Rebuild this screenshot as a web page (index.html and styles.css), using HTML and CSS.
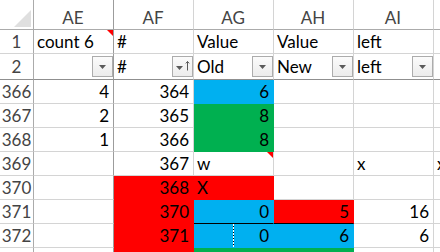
FILE: index.html
```html
<!DOCTYPE html>
<html lang="en">
<head>
  <meta charset="UTF-8">
  <meta name="viewport" content="width=device-width, initial-scale=1.0">
  <title>Sheet</title>
  <link rel="stylesheet" href="styles.css">
</head>
<body>
  <div class="sheet">
    <!-- Column headers -->
    <div class="c corner"><span class="corner-tri"></span></div>
    <div class="c hd frz">AE</div>
    <div class="c hd">AF</div>
    <div class="c hd">AG</div>
    <div class="c hd">AH</div>
    <div class="c hd">AI</div>
    <div class="c hd"></div>

    <!-- Row 1 -->
    <div class="c rh">1</div>
    <div class="c frz">count 6<span class="note"></span></div>
    <div class="c">#</div>
    <div class="c">Value</div>
    <div class="c">Value</div>
    <div class="c">left</div>
    <div class="c"></div>

    <!-- Row 2 : filter row -->
    <div class="c rh r2">2</div>
    <div class="c frz r2 flt">
      <span></span>
      <button class="drop"><svg width="9" height="5" viewBox="0 0 9 5"><polygon points="1,0 8,0 4.5,4" fill="#595959"/></svg></button>
    </div>
    <div class="c r2 flt">
      <span>#</span>
      <button class="drop sort">
        <svg width="15" height="12" viewBox="0 0 15 12">
          <polygon points="0,6 7,6 3.5,10" fill="#595959"/>
          <path d="M11.5 1.5v9M9.8 3.4l1.7-1.9 1.7 1.9" stroke="#595959" stroke-width="1" fill="none"/>
        </svg>
      </button>
    </div>
    <div class="c r2 flt">
      <span>Old</span>
      <button class="drop"><svg width="9" height="5" viewBox="0 0 9 5"><polygon points="1,0 8,0 4.5,4" fill="#595959"/></svg></button>
    </div>
    <div class="c r2 flt">
      <span>New</span>
      <button class="drop"><svg width="9" height="5" viewBox="0 0 9 5"><polygon points="1,0 8,0 4.5,4" fill="#595959"/></svg></button>
    </div>
    <div class="c r2 flt">
      <span>left</span>
      <button class="drop"><svg width="9" height="5" viewBox="0 0 9 5"><polygon points="1,0 8,0 4.5,4" fill="#595959"/></svg></button>
    </div>
    <div class="c r2"></div>

    <!-- Row 366 -->
    <div class="c rh">366</div>
    <div class="c frz num">4</div>
    <div class="c num">364</div>
    <div class="c num blue">6</div>
    <div class="c"></div>
    <div class="c"></div>
    <div class="c"></div>

    <!-- Row 367 -->
    <div class="c rh">367</div>
    <div class="c frz num">2</div>
    <div class="c num">365</div>
    <div class="c num green">8</div>
    <div class="c"></div>
    <div class="c"></div>
    <div class="c"></div>

    <!-- Row 368 -->
    <div class="c rh">368</div>
    <div class="c frz num">1</div>
    <div class="c num">366</div>
    <div class="c num green">8</div>
    <div class="c"></div>
    <div class="c"></div>
    <div class="c"></div>

    <!-- Row 369 -->
    <div class="c rh">369</div>
    <div class="c frz"></div>
    <div class="c num">367</div>
    <div class="c">w<span class="note"></span></div>
    <div class="c"></div>
    <div class="c">x</div>
    <div class="c">x</div>

    <!-- Row 370 -->
    <div class="c rh">370</div>
    <div class="c frz"></div>
    <div class="c num red">368</div>
    <div class="c red">X</div>
    <div class="c"></div>
    <div class="c"></div>
    <div class="c"></div>

    <!-- Row 371 -->
    <div class="c rh">371</div>
    <div class="c frz"></div>
    <div class="c num red">370</div>
    <div class="c num blue edge">0</div>
    <div class="c num red edge">5</div>
    <div class="c num">16</div>
    <div class="c"></div>

    <!-- Row 372 -->
    <div class="c rh">372</div>
    <div class="c frz"></div>
    <div class="c num red">371</div>
    <div class="c num blue">0<span class="dash"></span></div>
    <div class="c num blue">6</div>
    <div class="c num">6</div>
    <div class="c"></div>

    <!-- Row 373, only its top edge shows -->
    <div class="c rh"></div>
    <div class="c frz"></div>
    <div class="c red"></div>
    <div class="c green"></div>
    <div class="c green"></div>
    <div class="c"></div>
    <div class="c"></div>
  </div>
</body>
</html>
```

FILE: styles.css
```css
/* Page */
body {
  margin: 0;
  background: #fff;
  font-family: Lato, "Liberation Sans", sans-serif;
  font-size: 17px;
  overflow: hidden;
}

/* Grid of cells */
.sheet {
  display: grid;
  grid-template-columns: 34px repeat(6, 80px);
  grid-template-rows: 30px 24px 26px;
  grid-auto-rows: 24px;
}

.c {
  position: relative;
  box-sizing: border-box;
  border-right: 1px solid #d4d4d4;
  border-bottom: 1px solid #d4d4d4;
  padding: 0 4px 0 3px;
  line-height: 23px;
  white-space: nowrap;
  overflow: hidden;
  color: #000;
}

.num {
  text-align: right;
}

/* Headers */
.corner {
  border-right-color: #ababab;
  border-bottom-color: #ababab;
}

.corner-tri {
  position: absolute;
  right: 2px;
  bottom: 2px;
  width: 0;
  height: 0;
  border-left: 17px solid transparent;
  border-bottom: 17px solid #dfdfdf;
}

.hd {
  text-align: center;
  color: #444;
  padding-top: 6px;
  border-bottom-color: #ababab;
}

.rh {
  text-align: center;
  color: #444;
  padding: 0;
  border-right-color: #ababab;
}

/* Frozen pane lines */
.frz {
  border-right-color: #9c9c9c;
}

.r2 {
  border-bottom-color: #8f8f8f;
  padding-top: 1px;
}

/* Filter buttons */
.flt {
  display: flex;
  align-items: flex-start;
  padding-right: 0;
}

.flt span {
  flex: 1;
}

.drop {
  box-sizing: border-box;
  width: 21px;
  height: 21px;
  margin-top: 1px;
  padding: 0;
  border: 1px solid #acacac;
  background: linear-gradient(#fbfbfb, #ececec);
  display: flex;
  align-items: center;
  justify-content: center;
}

.drop svg {
  display: block;
  margin-top: 1px;
}

.drop.sort svg {
  margin: -2px 0 0 1px;
}

/* Comment marker */
.note {
  position: absolute;
  top: 0;
  right: 0;
  width: 0;
  height: 0;
  border-left: 6px solid transparent;
  border-top: 6px solid #f00;
}

/* Fills */
.blue {
  background: #00b0f0;
  border-color: #00b0f0;
}

.green {
  background: #00b050;
  border-color: #00b050;
}

.red {
  background: #f00;
  border-color: #f00;
}

.edge {
  border-bottom-color: #000;
}

/* Dashed marker inside AG372 */
.dash {
  position: absolute;
  left: 39px;
  top: 0;
  bottom: 0;
  width: 1px;
  background: repeating-linear-gradient(#fff 0 2px, #000 2px 3px);
}
```
